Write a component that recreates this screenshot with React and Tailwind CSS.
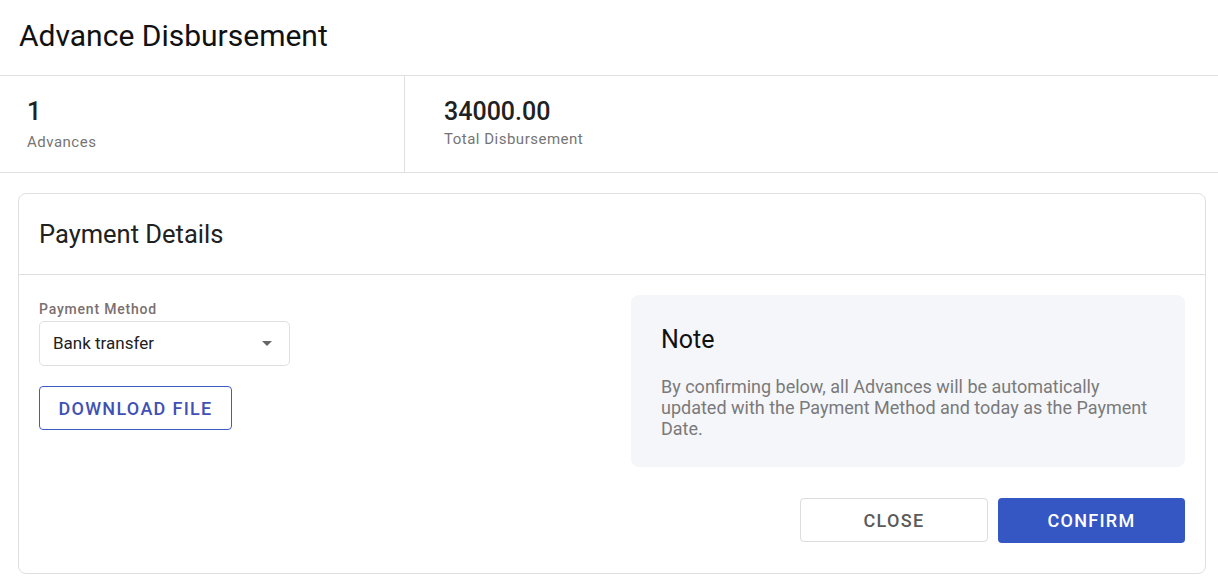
import React from "react";

const Stat = ({ value, label, gap, className }) => (
  <div className={className}>
    <div className="text-[25px] font-medium leading-none text-[#212121]">{value}</div>
    <div className={`${gap} text-[15px] tracking-[0.5px] text-[#757575]`}>{label}</div>
  </div>
);

const App = () => {
  return (
    <div className="w-[1218px] h-[584px] bg-white font-['Roboto',sans-serif] overflow-hidden">
      <header className="h-[76px] border-b border-[#e0e0e0] pl-[19px] pt-[17px]">
        <h1 className="text-[30px] leading-[38px] text-[#111]">Advance Disbursement</h1>
      </header>

      <div className="flex h-[97px] border-b border-[#e0e0e0]">
        <Stat value="1" label="Advances" gap="mt-[7px]" className="w-[405px] border-r border-[#e0e0e0] pl-[27px] pt-[23px]" />
        <Stat value="34000.00" label="Total Disbursement" gap="mt-[4px]" className="flex-1 pl-[39px] pt-[23px]" />
      </div>

      <section className="ml-[18px] mt-[20px] h-[381px] w-[1188px] rounded-[8px] border border-[#e0e0e0] flex flex-col">
        <div className="h-[81px] border-b border-[#e0e0e0] pl-[20px] pt-[25px]">
          <h2 className="text-[25.5px] leading-[30px] text-[#212121]">Payment Details</h2>
        </div>

        <div className="flex flex-1 pl-[20px] pr-[20px] pt-[20px]">
          <div className="w-[592px]">
            <label className="block pt-[6px] text-[14px] font-medium leading-[16px] tracking-[0.8px] text-[#7b6f6f]">
              Payment Method
            </label>
            <button className="mt-[4px] flex h-[45px] w-[251px] items-center justify-between rounded-[5px] border border-[#e0e0e0] pl-[13px] pr-[17px] text-[17px] text-[#212121]">
              <span>Bank transfer</span>
              <svg width="10" height="5" viewBox="0 0 10 5">
                <path d="M0 0h10L5 5z" fill="#666" />
              </svg>
            </button>
            <button className="mt-[20px] h-[44px] w-[193px] rounded-[4px] border border-[#3f5cc4] text-[18px] font-medium tracking-[1.3px] text-[#3f51b5]">
              DOWNLOAD FILE
            </button>
          </div>

          <div className="flex flex-1 flex-col">
            <div className="h-[172px] rounded-[8px] bg-[#f5f6fa] pl-[30px] pr-[24px] pt-[30px]">
              <h3 className="text-[25px] leading-[30px] text-[#111]">Note</h3>
              <p className="mt-[21px] text-[18px] leading-[21px] text-[#7a7a7a]">
                By confirming below, all Advances will be automatically updated with the Payment Method and today as the Payment Date.
              </p>
            </div>
            <div className="mt-[31px] flex justify-end gap-[10px]">
              <button className="h-[44px] w-[188px] rounded-[4px] border border-[#dcdcdc] text-[18px] font-medium tracking-[1.3px] text-[#5a5a5a]">
                CLOSE
              </button>
              <button className="h-[45px] w-[187px] rounded-[4px] bg-[#3557c3] text-[18px] font-medium tracking-[1.3px] text-white">
                CONFIRM
              </button>
            </div>
          </div>
        </div>
      </section>
    </div>
  );
};

export default App;
